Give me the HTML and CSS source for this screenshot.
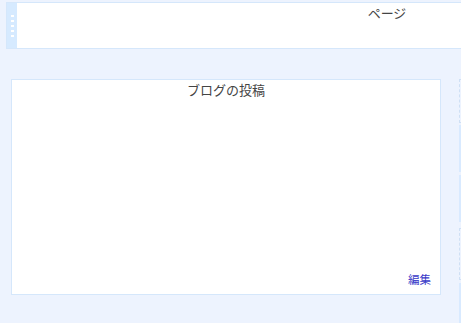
FILE: index.html
```html
<!DOCTYPE html>
<html lang="ja">
<head>
<meta charset="utf-8">
<link rel="stylesheet" href="styles.css">
</head>
<body>
<div class="top-panel">
  <div class="handle">
    <span class="dot"></span><span class="dot"></span><span class="dot"></span><span class="dot"></span><span class="dot"></span>
  </div>
  <div class="panel-body">
    <div class="panel-title">ページ</div>
  </div>
</div>
<div class="main">
  <div class="card">
    <div class="card-title">ブログの投稿</div>
    <div class="card-foot"><a class="edit" href="#">編集</a></div>
  </div>
  <div class="side">
    <div class="slot dashed s1"></div>
    <div class="slot solid s2"></div>
    <div class="slot solid s3"></div>
    <div class="slot dashed s4"></div>
    <div class="slot solid s5"></div>
  </div>
</div>
</body>
</html>
```
FILE: styles.css
```css
html, body {
  margin: 0;
  padding: 0;
  background: #edf3fe;
  overflow: hidden;
  font-family: "Noto Sans CJK JP", "Noto Sans", sans-serif;
  color: #444;
}
.top-panel {
  display: flex;
  margin: 2px 0 0 6px;
  width: 750px;
  height: 45px;
  border: 1px solid #d5e7fb;
}
.handle {
  width: 10px;
  flex: none;
  background: #d6eaff;
  display: flex;
  flex-direction: column;
  align-items: center;
  gap: 3px;
  padding-top: 12px;
  box-sizing: border-box;
}
.dot {
  display: block;
  width: 3px;
  height: 2px;
  background: #fff;
}
.panel-body {
  flex: 1;
  background: #fff;
  text-align: center;
}
.panel-title {
  font-size: 13px;
  line-height: 18px;
  padding-top: 1px;
  color: #444;
}
.main {
  display: flex;
  gap: 18px;
  margin: 30px 0 0 11px;
  width: 520px;
}
.card {
  flex: none;
  width: 428px;
  height: 214px;
  background: #fff;
  border: 1px solid #d5e7fb;
  display: flex;
  flex-direction: column;
  justify-content: space-between;
}
.card-title {
  text-align: center;
  font-size: 13px;
  line-height: 18px;
  padding-top: 1px;
  color: #444;
}
.card-foot {
  text-align: right;
  padding: 0 9px 7px 0;
  font-size: 11.5px;
  line-height: 16px;
}
.edit {
  color: #3a3ac8;
  text-decoration: none;
}
.side {
  display: flex;
  flex-direction: column;
  width: 30px;
  flex: none;
}
.slot {
  box-sizing: border-box;
}
.dashed {
  border: 1px dashed #cfe0f5;
}
.solid {
  background: #d9eaff;
}
.s1 { height: 44px; }
.s2 { height: 47px; margin-top: 2px; }
.s3 { height: 47px; margin-top: 3px; }
.s4 { height: 52px; margin-top: 6px; }
.s5 { height: 60px; margin-top: 3px; }
```
